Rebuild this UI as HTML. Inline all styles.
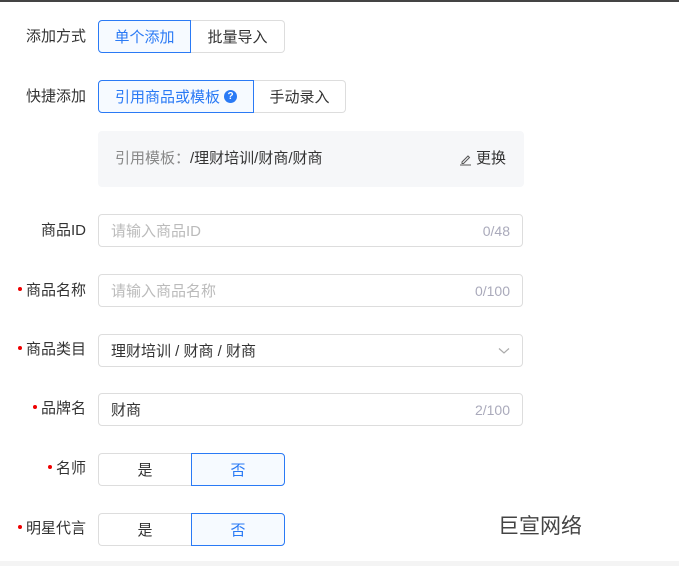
<!DOCTYPE html>
<html><head><meta charset="utf-8"><style>
*{box-sizing:border-box;margin:0;padding:0}
body{width:679px;height:566px;background:#fff;font-family:"Liberation Sans","Noto Sans CJK SC",sans-serif;font-size:15px;color:#333;position:relative;overflow:hidden}
.top{position:absolute;left:0;top:0;width:679px;height:2px;background:#444}
.bot{position:absolute;left:0;top:561px;width:679px;height:5px;background:#f4f4f4}
.lbl{position:absolute;right:593px;white-space:nowrap;line-height:20px;color:#333}
.lbl i{display:inline-block;width:4px;height:4px;border-radius:50%;background:#e00;margin-right:4px;vertical-align:4px}
.seg{position:absolute;display:flex;height:33px}
.seg div{border:1px solid #ddd;display:flex;align-items:center;justify-content:center;color:#333}
.seg .on{border-color:#2a7af5;background:#f6faff;color:#2a7af5}
.seg div:first-child{border-radius:4px 0 0 4px}
.seg div:last-child{border-radius:0 4px 4px 0}
.inp{position:absolute;left:98px;width:425px;height:33px;border:1px solid #ddd;border-radius:4px;display:flex;align-items:center;padding:0 12px;justify-content:space-between}
.ph{color:#bbb}.cnt{color:#aab;font-size:14px}
</style></head><body>
<div class="top"></div>
<div class="lbl" style="top:27px">添加方式</div>
<div class="seg" style="left:98px;top:20px"><div class="on" style="width:93px">单个添加</div><div style="width:94px;border-left:none">批量导入</div></div>
<div class="lbl" style="top:87px">快捷添加</div>
<div class="seg" style="left:98px;top:80px"><div class="on" style="width:156px">引用商品或模板<span style="display:inline-block;width:13px;height:13px;border-radius:50%;background:#2a7af5;color:#fff;font-size:10px;line-height:13px;text-align:center;margin-left:4px;font-weight:bold">?</span></div><div style="width:92px;border-left:none">手动录入</div></div>
<div style="position:absolute;left:98px;top:131px;width:426px;height:56px;background:#f6f7f9;border-radius:4px"></div>
<div style="position:absolute;left:115px;top:149px;line-height:20px"><span style="color:#888">引用模板：</span>/理财培训/财商/财商</div>
<div style="position:absolute;left:459px;top:149px;line-height:20px;display:flex;align-items:center"><svg width="13" height="13" viewBox="0 0 13 13" style="margin-right:4px"><path d="M3 9L9 3L10.5 4.5L4.5 10.5H3Z" stroke="#555" fill="none" stroke-width="1"/><path d="M1 12H12" stroke="#555" stroke-width="1"/></svg>更换</div>
<div class="lbl" style="top:221px">商品ID</div>
<div class="inp" style="top:214px"><span class="ph">请输入商品ID</span><span class="cnt">0/48</span></div>
<div class="lbl" style="top:281px"><i></i>商品名称</div>
<div class="inp" style="top:274px"><span class="ph">请输入商品名称</span><span class="cnt">0/100</span></div>
<div class="lbl" style="top:340px"><i></i>商品类目</div>
<div class="inp" style="top:334px"><span>理财培训 / 财商 / 财商</span><svg width="12" height="8" viewBox="0 0 12 8"><path d="M1 1.5L6 6L11 1.5" stroke="#aaa" fill="none" stroke-width="1.2"/></svg></div>
<div class="lbl" style="top:399px"><i></i>品牌名</div>
<div class="inp" style="top:393px"><span>财商</span><span class="cnt">2/100</span></div>
<div class="lbl" style="top:459px"><i></i>名师</div>
<div class="seg" style="left:98px;top:453px"><div style="width:93px;border-right:none">是</div><div class="on" style="width:94px">否</div></div>
<div class="lbl" style="top:519px"><i></i>明星代言</div>
<div class="seg" style="left:98px;top:513px"><div style="width:93px;border-right:none">是</div><div class="on" style="width:94px">否</div></div>
<div style="position:absolute;left:498px;top:514px;font-size:21px;color:#444;line-height:26px">巨宣网络</div>
<div class="bot"></div>
</body></html>
